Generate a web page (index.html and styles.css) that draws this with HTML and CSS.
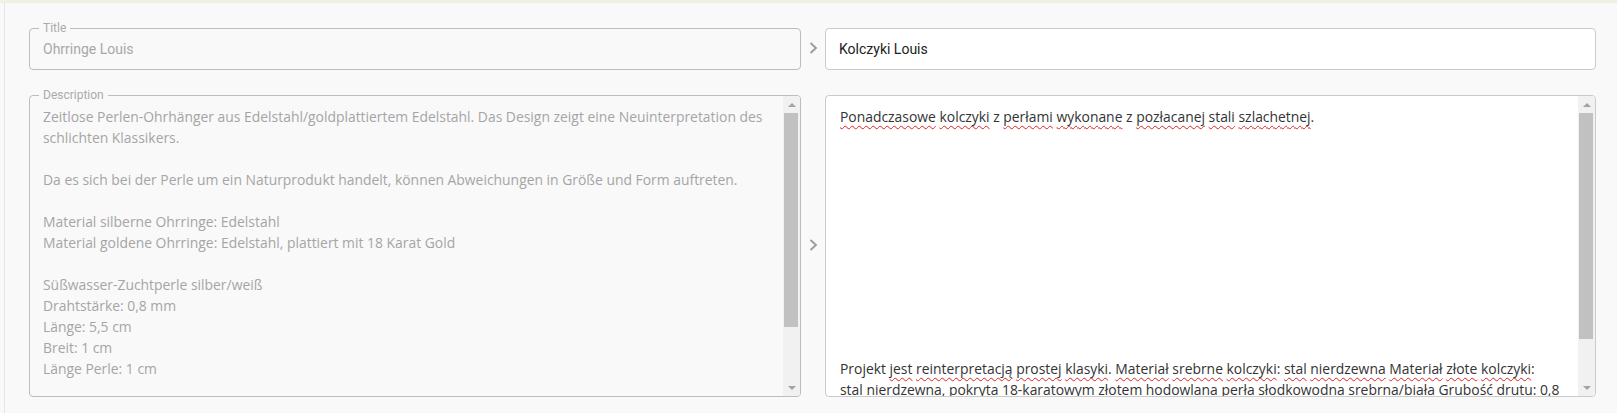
FILE: index.html
```html
<!DOCTYPE html>
<html lang="de">
<head>
    <meta charset="UTF-8" />
    <meta name="viewport" content="width=device-width, initial-scale=1" />
    <title>Übersetzung</title>
    <link rel="stylesheet" href="styles.css">
</head>
<body>

<div class="topbar"></div>

<div class="page">

    <!-- titre -->
    <div class="row row-title">
        <div class="field field-source">
            <span class="field-label">Title</span>
            <div class="field-value">Ohrringe Louis</div>
        </div>
        <div class="arrow">
            <svg width="9" height="12" viewBox="0 0 9 12"><path d="M1.5 1 L7 6 L1.5 11" fill="none" stroke="#9a9a9a" stroke-width="1.8"/></svg>
        </div>
        <div class="field field-target">
            <div class="field-value">Kolczyki Louis</div>
        </div>
    </div>

    <!-- description -->
    <div class="row row-desc">
        <div class="field field-source area">
            <span class="field-label">Description</span>
<div class="area-text">Zeitlose Perlen-Ohrhänger aus Edelstahl/goldplattiertem Edelstahl. Das Design zeigt eine Neuinterpretation des
schlichten Klassikers.

Da es sich bei der Perle um ein Naturprodukt handelt, können Abweichungen in Größe und Form auftreten.

Material silberne Ohrringe: Edelstahl
Material goldene Ohrringe: Edelstahl, plattiert mit 18 Karat Gold

Süßwasser-Zuchtperle silber/weiß
Drahtstärke: 0,8 mm
Länge: 5,5 cm
Breit: 1 cm
Länge Perle: 1 cm</div>
            <div class="scrollbar">
                <div class="sb-btn"><span class="tri-up"></span></div>
                <div class="sb-thumb thumb-left"></div>
                <div class="sb-space"></div>
                <div class="sb-btn"><span class="tri-down"></span></div>
            </div>
        </div>
        <div class="arrow">
            <svg width="9" height="12" viewBox="0 0 9 12"><path d="M1.5 1 L7 6 L1.5 11" fill="none" stroke="#9a9a9a" stroke-width="1.8"/></svg>
        </div>
        <div class="field field-target area">
<div class="area-text"><span class="spell">Ponadczasowe</span> <span class="spell">kolczyki</span> z <span class="spell">perłami</span> <span class="spell">wykonane</span> z <span class="spell">pozłacanej</span> <span class="spell">stali</span> <span class="spell">szlachetnej</span>.











Projekt <span class="spell">jest</span> <span class="spell">reinterpretacją</span> <span class="spell">prostej</span> <span class="spell">klasyki</span>. <span class="spell">Materiał</span> <span class="spell">srebrne</span> <span class="spell">kolczyki</span>: <span class="spell">stal</span> <span class="spell">nierdzewna</span> <span class="spell">Materiał</span> <span class="spell">złote</span> <span class="spell">kolczyki</span>:
stal nierdzewna, pokryta 18-karatowym złotem hodowlana perła słodkowodna srebrna/biała Grubość drutu: 0,8</div>
            <div class="scrollbar">
                <div class="sb-btn"><span class="tri-up"></span></div>
                <div class="sb-thumb thumb-right"></div>
                <div class="sb-space"></div>
                <div class="sb-btn"><span class="tri-down"></span></div>
            </div>
        </div>
    </div>

</div>

</body>
</html>
```

FILE: styles.css
```css
body {
    margin: 0;
    background: #f9f9f9;
    font-family: Roboto, 'Liberation Sans', sans-serif;
    color: #222;
}
.topbar {
    height: 3px;
    background: #edf3e3;
}
.page {
    margin-left: 4px;
    border-left: 1px solid #e6e6e6;
    padding: 25px 21px 0 24px;
    min-height: 410px;
    box-sizing: border-box;
}
.row {
    display: grid;
    grid-template-columns: 772px 24px 771px;
}
.row-title {
    grid-template-rows: 42px;
}
.row-desc {
    margin-top: 25px;
    grid-template-rows: 302px;
}
.field {
    position: relative;
    box-sizing: border-box;
    border-radius: 4px;
    min-height: 0;
}
.field-source {
    border: 1px solid #bdbdbd;
    background: #f9f9f9;
}
.field-target {
    border: 1px solid #cbcbcb;
    background: #fff;
}
.field-label {
    position: absolute;
    top: -8px;
    left: 9px;
    z-index: 1;
    padding: 0 4px;
    background: #f9f9f9;
    font-size: 12px;
    line-height: 14px;
    color: #ababab;
}
.row-title .field {
    display: flex;
    align-items: center;
    padding: 0 13px;
}
.field-value {
    font-size: 14px;
    line-height: 20px;
}
.field-source .field-value {
    color: #a8a8a8;
}
.field-target .field-value {
    color: #222;
}
.arrow {
    display: flex;
    align-items: center;
    justify-content: center;
    padding-bottom: 3px;
}
.area {
    display: flex;
    height: 302px;
}
.area-text {
    flex: 1;
    padding: 10px 0 0 13px;
    font-family: 'Open Sans', Lato, sans-serif;
    font-size: 13.9px;
    line-height: 21px;
    white-space: pre;
    overflow: hidden;
    color: #a5a5a5;
}
.field-target .area-text {
    padding-left: 14px;
    color: #333;
}
.spell {
    text-decoration: underline wavy #e02020;
    text-decoration-thickness: 1px;
    text-decoration-skip-ink: none;
    text-underline-offset: 3px;
}
.scrollbar {
    width: 17px;
    background: #f1f1f1;
    display: flex;
    flex-direction: column;
    border-radius: 0 3px 3px 0;
}
.sb-btn {
    height: 17px;
    display: flex;
    align-items: center;
    justify-content: center;
}
.tri-up {
    border-left: 4px solid transparent;
    border-right: 4px solid transparent;
    border-bottom: 4px solid #a3a3a3;
}
.tri-down {
    border-left: 4px solid transparent;
    border-right: 4px solid transparent;
    border-top: 4px solid #a3a3a3;
}
.sb-thumb {
    margin: 0 2px 0 1px;
    background: #c1c1c1;
}
.thumb-left {
    height: 214px;
}
.thumb-right {
    height: 226px;
}
.sb-space {
    flex: 1;
}
```
